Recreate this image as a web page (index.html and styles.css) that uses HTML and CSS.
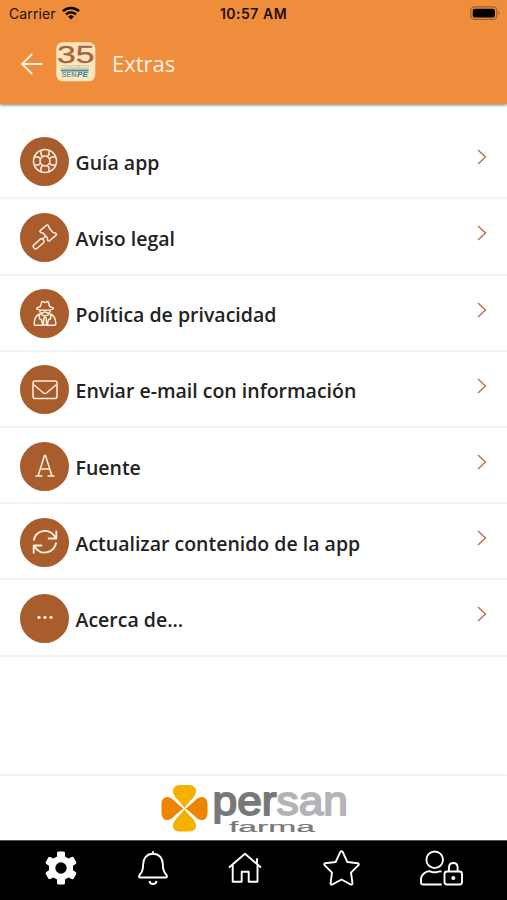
FILE: index.html
```html
<!DOCTYPE html>
<html lang="es">

<head>
  <meta charset="utf-8">
  <meta name="viewport" content="width=device-width, initial-scale=1">
  <title>Extras</title>
  <link rel="stylesheet" href="styles.css">
</head>

<body>
  <header>
    <div class="status-bar">
      <div class="carrier">
        <span>Carrier</span>
        <svg width="18" height="14" viewBox="0 0 18 14">
          <path d="M1 5.2a11.4 11.4 0 0 1 16 0" fill="none" stroke="#000" stroke-width="2.5"/>
          <path d="M4 8.4a7.2 7.2 0 0 1 10 0" fill="none" stroke="#000" stroke-width="2.4"/>
          <path d="M6.2 10.7a4 4 0 0 1 5.6 0L9 13.5z"/>
        </svg>
      </div>
      <span class="time">10:57 AM</span>
      <svg class="battery" width="31" height="15" viewBox="0 0 31 15">
        <rect x=".8" y=".8" width="26" height="12.6" rx="3.8" fill="none" stroke="#9d602b" stroke-width="1.2"/>
        <rect x="2.7" y="2.7" width="22.2" height="8.9" rx="2"/>
        <path d="M28.4 4.8q2.2 2.3 0 4.6z" fill="#9d602b"/>
      </svg>
    </div>
    <div class="title-bar">
      <svg class="back" width="22" height="22" viewBox="0 0 22 22">
        <path d="M21.5 11H1M11.2 1L1 11l10.2 10"/>
      </svg>
      <svg class="app-logo" width="40" height="40" viewBox="0 0 40 40">
        <rect x=".3" y=".3" width="39" height="39" rx="6.5" fill="#fbe7bf"/>
        <text class="logo-num" x="1" y="20.8" textLength="37.5" lengthAdjust="spacingAndGlyphs">35</text>
        <text class="logo-small" x="5" y="27" textLength="28" lengthAdjust="spacingAndGlyphs">CONGRESO</text>
        <path d="M4.5 27.6h28.5l-.8 2H5.300z" fill="#4594a9"/>
        <text class="logo-sen" x="5.500" y="34.800" textLength="15" lengthAdjust="spacingAndGlyphs">SEN</text>
        <text class="logo-pe" x="21" y="34.800" textLength="11" lengthAdjust="spacingAndGlyphs">PE</text>
      </svg>
      <h1>Extras</h1>
    </div>
  </header>

  <ul class="menu">
    <li>
      <span class="circle">
        <svg viewBox="0 0 26 26">
          <circle cx="13" cy="13" r="11.5"/>
          <circle cx="13" cy="13" r="5"/>
          <path d="M9 2.200v4.300l1.700 2M17 2.200v4.300l-1.700 2M9 23.800v-4.300l1.700-2M17 23.800v-4.300l-1.700-2M2.200 9h4.300l2 1.700M2.200 17h4.300l2-1.700M23.800 9h-4.300l-2 1.700M23.800 17h-4.300l-2-1.700"/>
        </svg>
      </span>
      <span class="label">Guía app</span>
      <svg class="chevron" viewBox="0 0 10 16"><path d="M1 1l7.500 7L1 15"/></svg>
    </li>
    <li>
      <span class="circle">
        <svg viewBox="0 0 26 26">
          <path d="M14.100 1.500q1.200-1 2.200.1l.9 2.500 3.800 4.300 2.800.9q1.400.9.100 2.100l-6.300 5.400q-1.500.9-2-.7l-.3-2.300-4.200-4.800-2.500-.6q-1.200-.9-.1-2z"/>
          <path d="M13.600 12.300l-2.900 2.500M1.500 21.200l6.800-6.100q1.500-1 2.500.2l.9 1q1 1.400-.2 2.500l-6.800 5.900q-1.400.8-2.300-.3l-1-1.100q-.8-1.100.1-2.100z"/>
        </svg>
      </span>
      <span class="label">Aviso legal</span>
      <svg class="chevron" viewBox="0 0 10 16"><path d="M1 1l7.500 7L1 15"/></svg>
    </li>
    <li>
      <span class="circle">
        <svg viewBox="0 0 26 26">
          <path d="M8.200 6L9.600 1.300q.5-1.300 1.600-.5l1.800.8 1.800-.8q1.100-.8 1.600.5L17.800 6M8.200 5.800Q4.500 6.600 4.700 7.600 5.200 9.200 13 9.300q7.800-.1 8.300-1.700.2-1-3.500-1.800"/>
          <path d="M8 9.300v1.500q.5 1.900 2.300 1.500l1.500-1q1.200-.5 2.400 0l1.500 1q1.800.4 2.300-1.500V9.300M8.300 12.700q4.700 4.300 9.400 0"/>
          <path d="M7.200 13q-4.500 2-5 9v1q0 1.200 1.300 1.200h7.300l-1.300-5.500-2-.8zM18.800 13q4.500 2 5 9v1q0 1.200-1.300 1.200h-7.300l1.300-5.500 2-.8zM12 16.500l-.8 7.500h3.600l-.8-7.500z"/>
        </svg>
      </span>
      <span class="label">Política de privacidad</span>
      <svg class="chevron" viewBox="0 0 10 16"><path d="M1 1l7.500 7L1 15"/></svg>
    </li>
    <li>
      <span class="circle">
        <svg viewBox="0 0 26 26">
          <rect x="1" y="4" width="24" height="17.500" rx="2"/>
          <path d="M1.500 7.500l10 8.500q1.500 1 3 0l10-8.500"/>
        </svg>
      </span>
      <span class="label">Enviar e-mail con información</span>
      <svg class="chevron" viewBox="0 0 10 16"><path d="M1 1l7.500 7L1 15"/></svg>
    </li>
    <li>
      <span class="circle">
        <svg viewBox="0 0 26 26">
          <path d="M3.500 23h7M15.500 23h7M6.200 22.500L12.500 2.500h1l6.300 20M8.300 16h9.400"/>
        </svg>
      </span>
      <span class="label">Fuente</span>
      <svg class="chevron" viewBox="0 0 10 16"><path d="M1 1l7.500 7L1 15"/></svg>
    </li>
    <li>
      <span class="circle">
        <svg class="thick" viewBox="0 0 26 26">
          <path d="M1.800 11.500C3.400 2 16.500-2.700 23.500 8.500M24.300 1.500v8h-8.500M24.200 13.500C22.600 23 9.500 28.700 2.500 17.200M1.700 24.500v-8h8.500"/>
        </svg>
      </span>
      <span class="label">Actualizar contenido de la app</span>
      <svg class="chevron" viewBox="0 0 10 16"><path d="M1 1l7.500 7L1 15"/></svg>
    </li>
    <li>
      <span class="circle">
        <svg class="dots" viewBox="0 0 26 26">
          <circle cx="7" cy="12.300" r="1.600"/>
          <circle cx="13" cy="12.300" r="1.600"/>
          <circle cx="19" cy="12.300" r="1.600"/>
        </svg>
      </span>
      <span class="label">Acerca de...</span>
      <svg class="chevron" viewBox="0 0 10 16"><path d="M1 1l7.500 7L1 15"/></svg>
    </li>
  </ul>

  <footer>
    <div class="sponsor">
      <svg width="190" height="56" viewBox="0 0 190 56">
        <g fill="#f6b100">
          <path d="M24.500 27Q23 24 15.500 16.500C10 9 14 4 20 4h9c6 0 10 5 4.500 12.500Q26 24 24.500 27z"/>
          <path d="M24.500 28Q23 31 15.500 38.500C10 46 14 50.500 20 50.500h9c6 0 10-4.500 4.500-12Q26 31 24.500 28z"/>
        </g>
        <g fill="#ef8400">
          <path d="M23.700 27.500Q20.500 26 13 18.500C6.500 13 1.500 17 1.500 23v9c0 6 5 10 11.500 4.500Q20.500 29 23.700 27.500z"/>
          <path d="M25.300 27.500Q28.500 26 36 18.500C42.500 13 47.500 17 47.500 23v9c0 6-5 10-11.500 4.500Q28.500 29 25.300 27.500z"/>
        </g>
        <text class="persan" x="52.500" y="33.500" textLength="135.500" lengthAdjust="spacingAndGlyphs">per<tspan>san</tspan></text>
        <text class="farma" x="69" y="51.300" textLength="86" lengthAdjust="spacingAndGlyphs">farma</text>
      </svg>
    </div>
    <nav>
      <a href="#">
        <svg class="gear" width="32" height="34" viewBox="0 0 32 34">
          <path fill-rule="evenodd" d="M12 2q0-1.500 1.500-1.500h5Q20 .5 20 2v3.500l3.500 2L26.700 6q1.300-.6 2 .6l2.500 4.300q.6 1.200-.5 2L28 14.800v4.400l2.700 1.900q1.100.8.500 2l-2.500 4.300q-.7 1.200-2 .6l-3.200-1.500-3.500 2V32q0 1.500-1.500 1.500h-5Q12 33.500 12 32v-3.500l-3.500-2L5.300 28q-1.300.6-2-.6L.8 23.100q-.6-1.200.5-2L4 19.200v-4.400l-2.700-1.900q-1.100-.8-.5-2l2.500-4.300q.7-1.200 2-.6l3.200 1.500 3.500-2zM16 11.300a5.700 5.700 0 1 0 0 11.400 5.700 5.700 0 1 0 0-11.400z"/>
        </svg>
      </a>
      <a href="#">
        <svg width="30" height="34" viewBox="0 0 30 34">
          <path d="M15 .3v2.500C8.500 2.800 5.300 7.500 5.200 13c-.1 6-.7 8-3.200 10.300-1.700 2-1 3.200.5 3.200h25c1.500 0 2.200-1.200.5-3.200-2.500-2.300-3.100-4.300-3.200-10.300C24.700 7.500 21.500 2.800 15 2.800M11.500 30q.4 3 3.500 3t3.500-3"/>
        </svg>
      </a>
      <a href="#">
        <svg width="34" height="34" viewBox="0 0 34 34">
          <path d="M1 16.500L17 2.700l16 13.800M4.700 14v16.800h9V20.700h7v10.100h8.800V14M29 13V7.200"/>
        </svg>
      </a>
      <a href="#">
        <svg width="37" height="36" viewBox="0 0 37 36">
          <path d="M17.300 1.900q1.200-1.300 2.400 0L24.300 12l10.500 1.200q1.500.7.700 2L28 22.700 29.500 33.500q-.3 1.500-1.800 1L18.500 29.500 9.300 34.500q-1.500.5-1.800-1L9 22.700 1.500 15.200q-.8-1.300.7-2L12.700 12z"/>
        </svg>
      </a>
      <a href="#">
        <svg width="43" height="36" viewBox="0 0 43 36">
          <circle cx="14.700" cy="9.800" r="8.300"/>
          <path d="M21.500 21.500q-2.500-.4-4 .3-2.800 1-5.800 0C7 20 1 24 1 29.500v3Q1 34.500 3.200 34.500h18.500"/>
          <rect x="24.500" y="21.500" width="17.500" height="13" rx="2.500"/>
          <path d="M29 21.500v-4.300q.3-4.200 4.300-4.200t4.300 4.200v4.300"/>
          <circle class="keyhole" cx="33.300" cy="28" r="2"/>
        </svg>
      </a>
    </nav>
  </footer>
</body>

</html>
```

FILE: styles.css
```css
* {
  margin: 0;
  padding: 0;
  box-sizing: border-box;
}

html,
body {
  width: 100%;
  height: 100%;
}

body {
  display: flex;
  flex-direction: column;
  background-color: #fff;
  font-family: "Open Sans", "Noto Sans", sans-serif;
  overflow: hidden;
}

ul {
  list-style: none;
}

svg {
  display: block;
  flex: none;
  overflow: visible;
}

header {
  height: 104px;
  flex: none;
  background-color: #ef8d3c;
  box-shadow: 0 1px 3px rgba(0, 0, 0, .55);
}

.status-bar {
  display: grid;
  grid-template-columns: 1fr auto 1fr;
  align-items: center;
  height: 27px;
  padding: 0 6px 0 9px;
  font-family: Inter, "Liberation Sans", sans-serif;
  font-size: 14px;
  color: #1c1008;
}

.carrier {
  display: flex;
  align-items: center;
  gap: 6px;
  letter-spacing: .1px;
}

.carrier svg {
  margin-top: -2px;
}

.time {
  margin-left: -3px;
  font-weight: 600;
  letter-spacing: .5px;
}

.battery {
  justify-self: end;
}

.title-bar {
  display: flex;
  align-items: center;
  height: 74px;
  padding-left: 21px;
}

.back {
  fill: none;
  stroke: #fff3e4;
  stroke-width: 1.8;
}

.app-logo {
  margin: -4px 0 0 13px;
}

.logo-num {
  font: 24px "Liberation Sans", sans-serif;
  fill: #a9613b;
  stroke: #a9613b;
  stroke-width: .3;
}

.logo-small {
  font: 4.5px "Liberation Sans", sans-serif;
  fill: #a9b29b;
}

.logo-sen {
  font: bold 6.5px "Liberation Sans", sans-serif;
  fill: #77939b;
}

.logo-pe {
  font: italic bold 6.5px "Liberation Sans", sans-serif;
  fill: #317f9c;
}

h1 {
  margin: -2px 0 0 16px;
  color: #fff3e4;
  font-size: 22px;
  font-weight: 400;
}

.menu {
  flex: 1;
  padding-top: 19.2px;
}

.menu li {
  display: flex;
  align-items: center;
  height: 76.2px;
  padding: 0 20px;
  border-bottom: 2px solid #f3f4f5;
}

.circle {
  display: flex;
  flex: none;
  align-items: center;
  justify-content: center;
  width: 49px;
  height: 49px;
  margin-top: 2px;
  border-radius: 50%;
  background-color: #a95c2c;
}

.circle svg {
  width: 26px;
  height: 26px;
  fill: none;
  stroke: #fff0df;
  stroke-width: 1.5;
  stroke-linejoin: round;
}

.circle .thick {
  stroke-width: 1.8;
}

.circle .dots {
  fill: #fff0df;
  stroke: none;
}

.label {
  flex: 1;
  margin: 4px 0 0 6.5px;
  color: #222;
  font-size: 19.5px;
  font-weight: 600;
}

.chevron {
  width: 10px;
  height: 16px;
  margin-top: -6px;
  fill: none;
  stroke: #b97142;
  stroke-width: 1.4;
}

footer {
  flex: none;
}

.sponsor {
  display: flex;
  height: 64px;
  padding: 5px 0 0 160px;
  background-color: #fff;
  box-shadow: 0 -1px 3px rgba(0, 0, 0, .1);
}

.persan {
  font: 41px "Liberation Sans", sans-serif;
  fill: #77787a;
  stroke: #77787a;
  stroke-width: 1.8;
  stroke-linejoin: round;
}

.persan tspan {
  fill: #b2b4b7;
  stroke: #b2b4b7;
}

.farma {
  font: 14px "Liberation Sans", sans-serif;
  fill: #77787a;
  stroke: #77787a;
  stroke-width: .2;
}

nav {
  display: flex;
  justify-content: space-between;
  align-items: center;
  height: 60px;
  padding: 0 44px 6px 45px;
  border-top: 1px solid #555;
  background-color: #000;
}

nav svg {
  fill: none;
  stroke: #fff;
  stroke-width: 1.9;
  stroke-linejoin: round;
}

nav .gear,
nav .keyhole {
  fill: #fff;
  stroke: none;
}
```
